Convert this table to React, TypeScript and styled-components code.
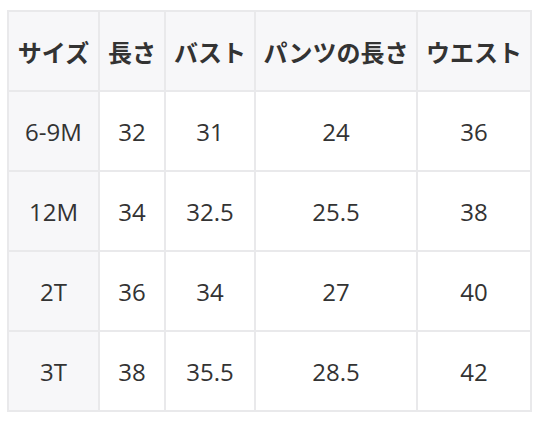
import React from "react";
import styled, { createGlobalStyle } from "styled-components";

const Global = createGlobalStyle`
  html, body { margin: 0; padding: 0; background: #ffffff; }
  body { font-family: "Open Sans", "Noto Sans CJK JP", sans-serif; }
`;

const Wrap = styled.div`
  padding: 10px 0 0 7px;
`;

const Table = styled.table`
  border-collapse: collapse;
  table-layout: fixed;
  width: 523px;
  color: #333333;
  font-size: 24px;
`;

const Col = styled.col<{ $w: number }>`
  width: ${(p) => p.$w}px;
`;

const Row = styled.tr`
  height: 80px;
`;

const HeadCell = styled.th`
  background: #f7f7f9;
  border: 2px solid #e9e9eb;
  font-family: "Noto Sans CJK JP", sans-serif;
  font-weight: 700;
  text-align: center;
  padding: 0;
  white-space: nowrap;
  letter-spacing: 0;
`;

const Cell = styled.td<{ $label?: boolean }>`
  background: ${(p) => (p.$label ? "#f7f7f9" : "#ffffff")};
  border: 2px solid #e9e9eb;
  text-align: center;
  padding: 0;
  font-weight: 400;
`;

const headers = ["サイズ", "長さ", "バスト", "パンツの長さ", "ウエスト"];
const widths = [91, 66, 90, 162, 114];
const rows = [
  ["6-9M", "32", "31", "24", "36"],
  ["12M", "34", "32.5", "25.5", "38"],
  ["2T", "36", "34", "27", "40"],
  ["3T", "38", "35.5", "28.5", "42"],
];

export default function App() {
  return (
    <>
      <Global />
      <Wrap>
        <Table>
          <colgroup>
            {widths.map((w, i) => (
              <Col key={i} $w={w} />
            ))}
          </colgroup>
          <thead>
            <Row>
              {headers.map((h) => (
                <HeadCell key={h}>{h}</HeadCell>
              ))}
            </Row>
          </thead>
          <tbody>
            {rows.map((r) => (
              <Row key={r[0]}>
                {r.map((v, i) => (
                  <Cell key={i} $label={i === 0}>
                    {v}
                  </Cell>
                ))}
              </Row>
            ))}
          </tbody>
        </Table>
      </Wrap>
    </>
  );
}
